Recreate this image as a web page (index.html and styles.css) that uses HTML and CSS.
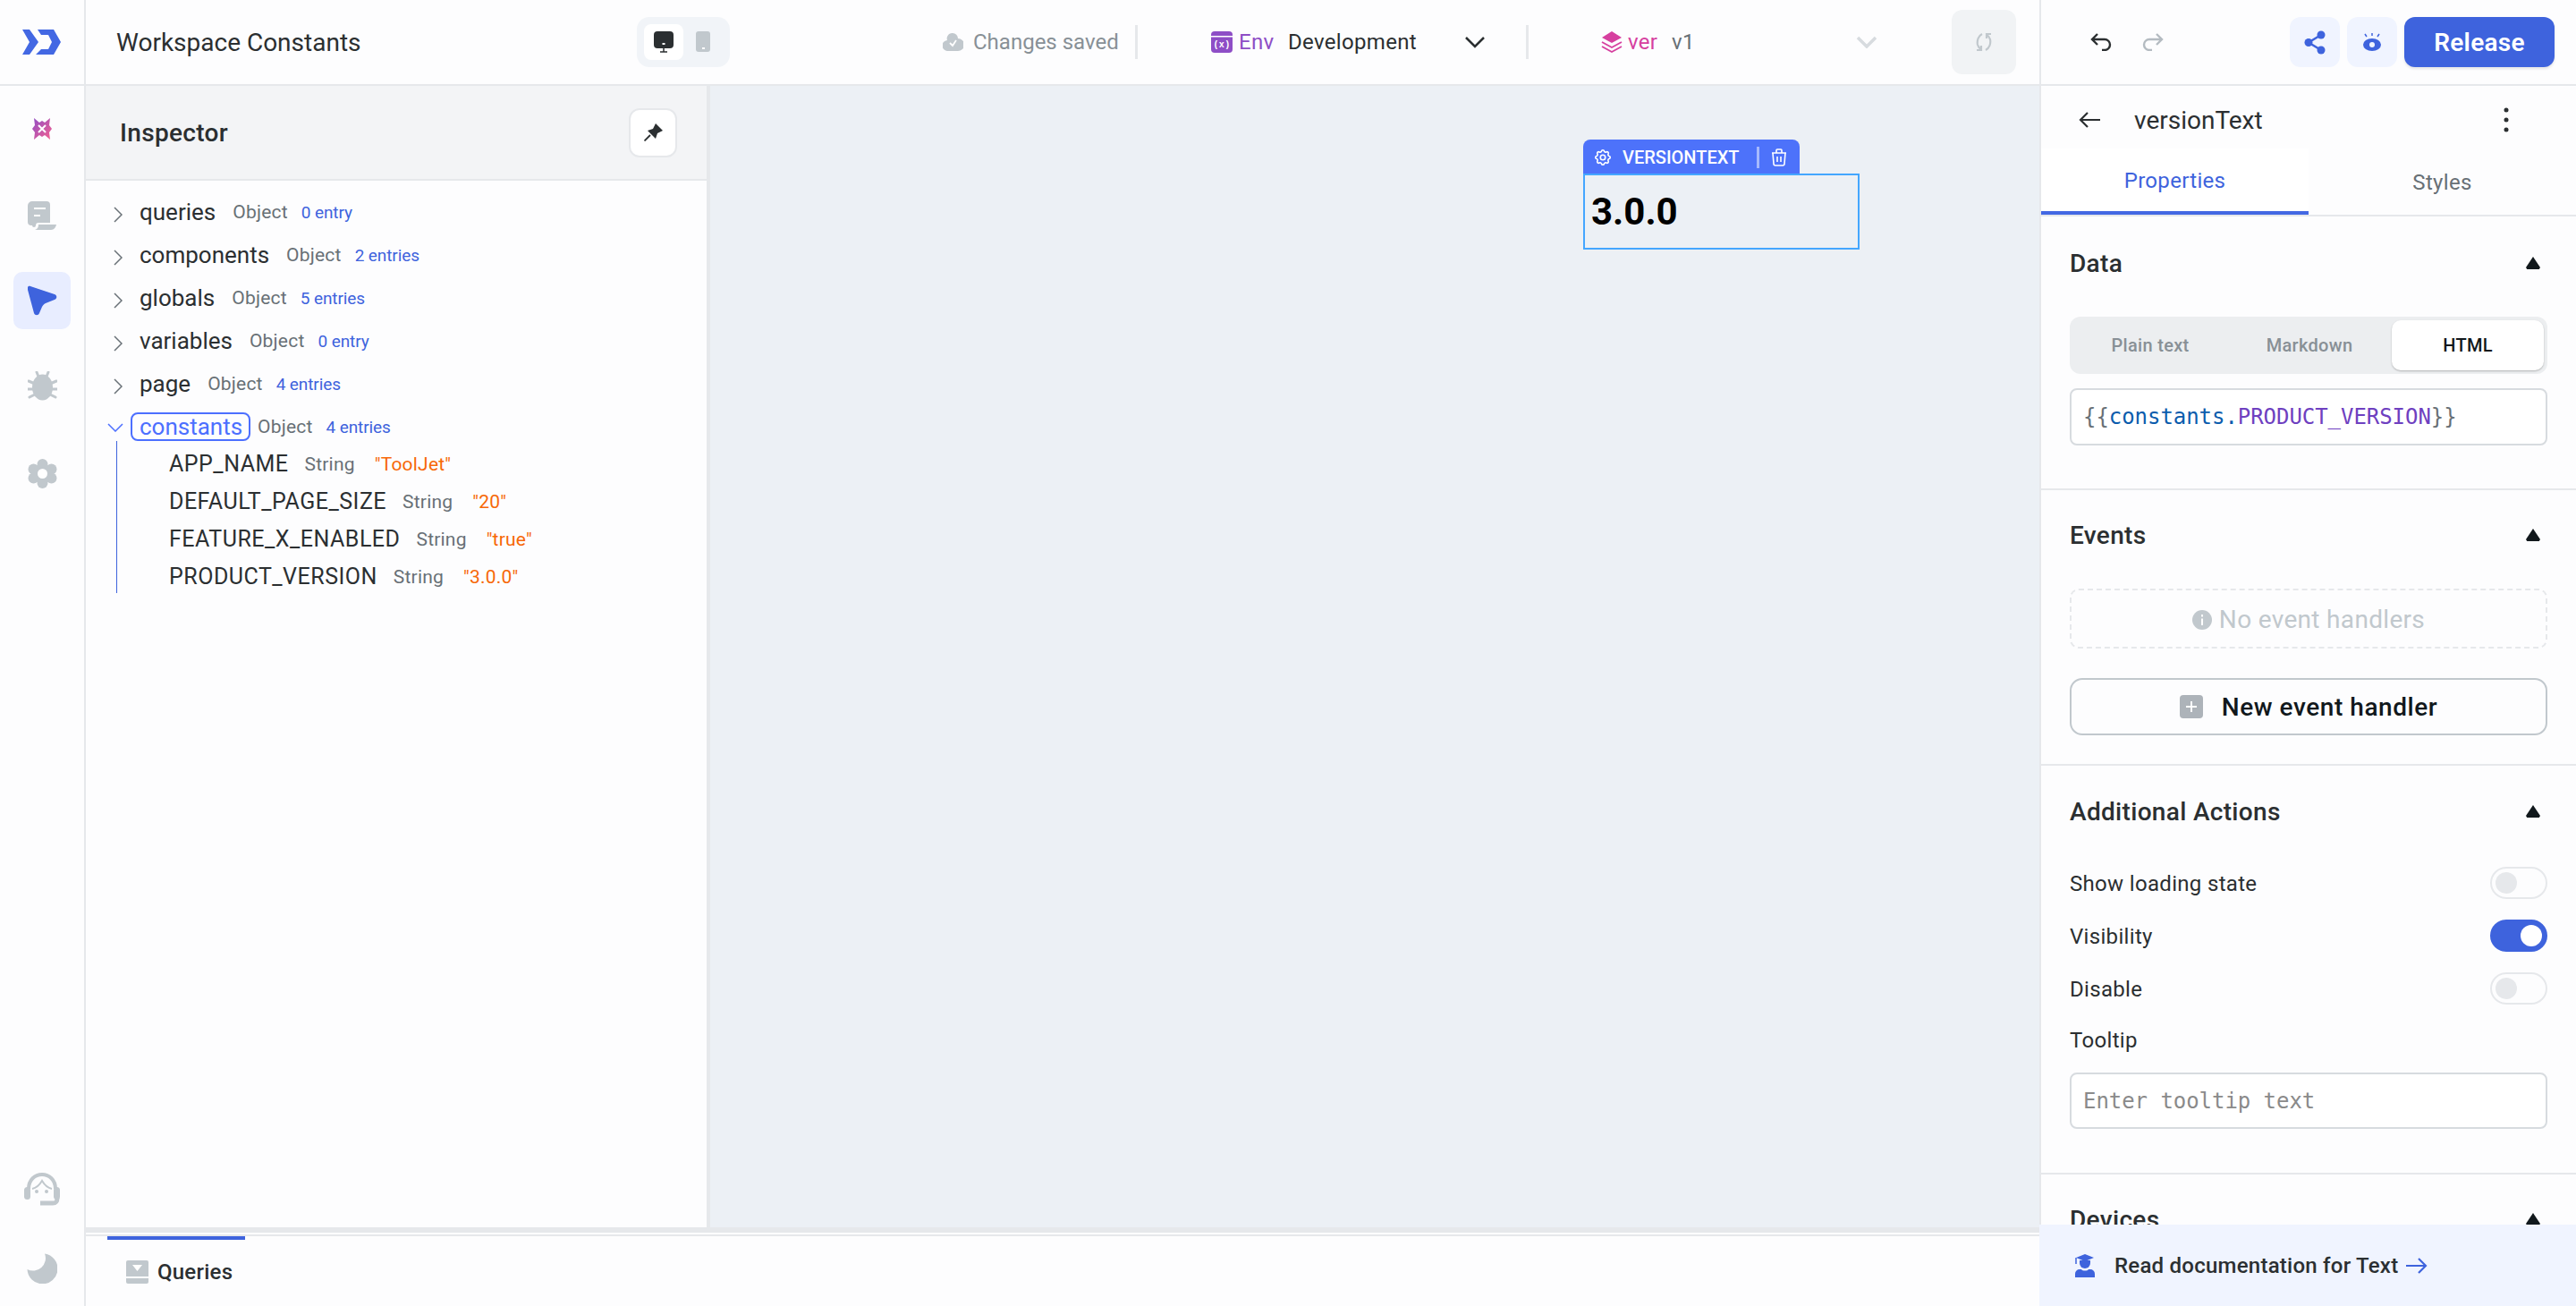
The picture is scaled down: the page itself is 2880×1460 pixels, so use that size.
FILE: index.html
```html
<!DOCTYPE html>
<html lang="en">
<head>
  <meta charset="UTF-8" />
  <title>Workspace Constants</title>
  <link rel="stylesheet" href="styles.css">
</head>
<body>
  <div class="app">
    <header class="topbar">
      <div class="logo-cell">
        <svg class="logo" viewBox="0 0 43 28"><path d="M0 0H8L18 14L8 28H0L8 14Z"/><path d="M17 0H35L43 14L35 28H15L21 22H29L33 14L29 6H21Z"/></svg>
      </div>
      <div class="top-main">
        <div class="app-name">Workspace Constants</div>
        <div class="layout-toggle">
          <span class="layout-on">
            <svg width="24" height="24" viewBox="0 0 24 24"><rect x="1" y="0" width="22" height="19" rx="4" fill="#2b2f31"/><rect x="10.500" y="13" width="3" height="2" fill="#fff"/><path d="M12 19V23M8 23H16" stroke="#2b2f31" stroke-width="1.500"/></svg>
          </span>
          <svg class="layout-off" width="16" height="24" viewBox="0 0 16 24"><rect width="16" height="23" rx="3" fill="#c1c8cd"/><rect x="7" y="18" width="3" height="2" fill="#fff"/></svg>
        </div>
        <div class="saved">
          <svg width="23" height="20" viewBox="0 0 23 20"><path d="M11 0a6 6 0 0 1 6 6a6.500 6.500 0 0 1 0 14H6A6 6 0 0 1 5 8a6 6 0 0 1 6-8Z" fill="#c1c8cd"/><path d="M8 11l3 3l4-6" fill="none" stroke="#fff" stroke-width="1.800"/></svg>
          <span>Changes saved</span>
        </div>
        <div class="top-divider"></div>
        <div class="env">
          <svg width="24" height="24" viewBox="0 0 24 24"><rect width="24" height="24" rx="4" fill="#8e4ec6"/><rect y="5" width="24" height="1.500" fill="#fff"/><text x="12" y="18" text-anchor="middle" class="env-glyph">(x)</text></svg>
          <span class="env-label">Env</span>
          <span class="env-value">Development</span>
          <svg class="chev" width="24" height="14" viewBox="0 0 24 14"><path d="M2 2L12 12L22 2" fill="none" stroke="#2b2f31" stroke-width="2.500"/></svg>
        </div>
        <div class="top-divider second"></div>
        <div class="ver">
          <svg width="24" height="24" viewBox="0 0 24 24" fill="none" stroke="#d6409f" stroke-width="1.800"><path d="M12 0L23 7L12 13L1 7Z" fill="#d6409f" stroke="none"/><path d="M1 12L12 18L23 12M1 17L12 23L23 17"/></svg>
          <span class="ver-label">ver</span>
          <span class="ver-value">v1</span>
          <svg class="chev" width="24" height="14" viewBox="0 0 24 14"><path d="M2 2L12 12L22 2" fill="none" stroke="#d7dbdf" stroke-width="3.500"/></svg>
        </div>
        <div class="sync">
          <svg width="20" height="20" viewBox="0 0 20 20" fill="none" stroke="#c1c8cd" stroke-width="2.200"><path d="M8 1C4 3 2 8 3 13C3.500 15 5 17 7 18M7 14V19H2"/><path d="M12 19C16 17 18 12 17 7C16.500 5 15 3 13 2M13 6V1H18"/></svg>
        </div>
      </div>
      <div class="top-right">
        <svg width="24" height="20" viewBox="0 0 24 20" fill="none" stroke="#2b2f31" stroke-width="2.400"><path d="M8 1L2 7L8 13M2 7H16a6 6 0 0 1 0 12H13"/></svg>
        <svg class="redo" width="24" height="20" viewBox="0 0 24 20" fill="none" stroke="#b4bbc1" stroke-width="2.400"><path d="M16 1L22 7L16 13M22 7H8a6 6 0 0 0 0 12H11"/></svg>
        <div class="top-actions">
          <div class="icon-btn">
            <svg width="24" height="27" viewBox="0 0 24 27"><path d="M19 5L5 13.500L19 22" fill="none" stroke="#3e63dd" stroke-width="2.500"/><circle cx="19" cy="5" r="4.500" fill="#3e63dd"/><circle cx="5" cy="13.500" r="4.500" fill="#3e63dd"/><circle cx="19" cy="22" r="4.500" fill="#3e63dd"/></svg>
          </div>
          <div class="icon-btn">
            <svg width="22" height="20" viewBox="0 0 22 20"><ellipse cx="11" cy="13" rx="10" ry="7" fill="#3e63dd"/><circle cx="11" cy="13" r="3" fill="#f0f4ff"/><path d="M11 0V3M3 1L5 4M19 1L17 4" stroke="#3e63dd" stroke-width="1.500"/></svg>
          </div>
          <button class="release">Release</button>
        </div>
      </div>
    </header>

    <div class="body-row">
      <nav class="sidebar">
        <div class="side-top">
          <svg width="24" height="24" viewBox="0 0 24 24"><defs><linearGradient id="star" x1="0" y1="0" x2="1" y2="1"><stop offset="0" stop-color="#8e4ec6"/><stop offset="1" stop-color="#f76190"/></linearGradient></defs><polygon points="3,0 9,5 12,3 15,5 21,0 20,8 23,12 20,16 21,24 15,19 12,21 9,19 3,24 4,16 1,12 4,8" fill="url(#star)"/><path d="M8 8L16 16M16 8L8 16" stroke="#fff" stroke-width="2"/></svg>
          <svg class="side-doc" width="33" height="33" viewBox="0 0 33 33"><path d="M5 0H21a4 4 0 0 1 4 4V24H12c-2 0-3 1-3 3a2 2 0 0 1-4 0H4a4 4 0 0 1-4-4V5a5 5 0 0 1 5-5Z" fill="#c1c8cd"/><path d="M12 26H32c-1 4-3 6-6 6H8c3-1 4-3 4-6Z" fill="#c1c8cd"/><path d="M7 8H20M7 16H14" stroke="#fff" stroke-width="2"/></svg>
          <div class="side-active">
            <svg width="33" height="34" viewBox="0 0 33 34"><path d="M3 1L30 10c3 1 3 5 0 6L20 20c-2 1-3 2-4 4L13 31c-1 3-5 3-6 0L0 5c-1-3 1-5 3-4Z" fill="#3e63dd"/></svg>
          </div>
          <svg class="side-bug" width="33" height="33" viewBox="0 0 33 33"><path d="M10 1L12 6M23 1L21 6M1 11L8 14M32 11L25 14M0 20H7M33 20H26M2 29L8 26M31 29L25 26" stroke="#c1c8cd" stroke-width="3" stroke-linecap="round"/><ellipse cx="16.500" cy="18" rx="11.500" ry="14.500" fill="#c1c8cd"/></svg>
          <svg class="side-gear" width="33" height="33" viewBox="0 0 33 33"><g fill="#c1c8cd"><circle cx="16.500" cy="6" r="6"/><circle cx="26.500" cy="11.500" r="6"/><circle cx="26.500" cy="21.500" r="6"/><circle cx="16.500" cy="27" r="6"/><circle cx="6.500" cy="21.500" r="6"/><circle cx="6.500" cy="11.500" r="6"/><circle cx="16.500" cy="16.500" r="11"/></g><circle cx="16.500" cy="16.500" r="5.500" fill="#fff"/></svg>
        </div>
        <div class="side-bottom">
          <svg width="40" height="37" viewBox="0 0 40 37"><path d="M5 18C5 8 12 2 20 2S35 8 35 18" fill="none" stroke="#c1c8cd" stroke-width="4"/><path d="M9 18C14 17 17 14 20 9C23 14 26 17 31 18" fill="none" stroke="#c1c8cd" stroke-width="2"/><rect x="0" y="16" width="7" height="14" rx="3.500" fill="#c1c8cd"/><rect x="33" y="16" width="7" height="14" rx="3.500" fill="#c1c8cd"/><circle cx="14" cy="21" r="2" fill="#c1c8cd"/><circle cx="25" cy="21" r="2" fill="#c1c8cd"/><path d="M37 28C37 32 36 34 32 34H18" fill="none" stroke="#c1c8cd" stroke-width="5"/></svg>
          <svg class="side-moon" width="34" height="34" viewBox="0 0 34 34"><path d="M20 .5A17 17 0 1 1 .5 18A14 14 0 0 0 20 .5Z" fill="#c1c8cd"/></svg>
        </div>
      </nav>

      <div class="center">
        <div class="work">
          <section class="inspector">
            <div class="inspector-head">
              <h2>Inspector</h2>
              <div class="pin-btn">
                <svg width="21" height="20" viewBox="0 0 21 20"><path d="M13 0L21 8L15 11L13 17L4 8L10 6Z" fill="#2b2f31"/><path d="M7 13L0.500 19.500" stroke="#2b2f31" stroke-width="1.800"/></svg>
              </div>
            </div>
            <div class="tree">
              <div class="row"><span class="caret"><svg width="10" height="18" viewBox="0 0 10 18"><path d="M1 1L9 9L1 17" fill="none" stroke="#687076" stroke-width="1.500"/></svg></span><span class="key">queries</span><span class="type">Object</span><span class="count">0 entry</span></div>
              <div class="row"><span class="caret"><svg width="10" height="18" viewBox="0 0 10 18"><path d="M1 1L9 9L1 17" fill="none" stroke="#687076" stroke-width="1.500"/></svg></span><span class="key">components</span><span class="type">Object</span><span class="count">2 entries</span></div>
              <div class="row"><span class="caret"><svg width="10" height="18" viewBox="0 0 10 18"><path d="M1 1L9 9L1 17" fill="none" stroke="#687076" stroke-width="1.500"/></svg></span><span class="key">globals</span><span class="type">Object</span><span class="count">5 entries</span></div>
              <div class="row"><span class="caret"><svg width="10" height="18" viewBox="0 0 10 18"><path d="M1 1L9 9L1 17" fill="none" stroke="#687076" stroke-width="1.500"/></svg></span><span class="key">variables</span><span class="type">Object</span><span class="count">0 entry</span></div>
              <div class="row"><span class="caret"><svg width="10" height="18" viewBox="0 0 10 18"><path d="M1 1L9 9L1 17" fill="none" stroke="#687076" stroke-width="1.500"/></svg></span><span class="key">page</span><span class="type">Object</span><span class="count">4 entries</span></div>
              <div class="row open"><span class="caret down"><svg width="18" height="10" viewBox="0 0 18 10"><path d="M1 1L9 9L17 1" fill="none" stroke="#4c6fff" stroke-width="1.500"/></svg></span><span class="key picked">constants</span><span class="type">Object</span><span class="count">4 entries</span></div>
              <div class="children">
                <div class="child"><span class="key">APP_NAME</span><span class="type">String</span><span class="value">"ToolJet"</span></div>
                <div class="child"><span class="key">DEFAULT_PAGE_SIZE</span><span class="type">String</span><span class="value">"20"</span></div>
                <div class="child"><span class="key">FEATURE_X_ENABLED</span><span class="type">String</span><span class="value">"true"</span></div>
                <div class="child"><span class="key">PRODUCT_VERSION</span><span class="type">String</span><span class="value">"3.0.0"</span></div>
              </div>
            </div>
          </section>
          <main class="canvas">
            <div class="widget-tag">
              <svg width="22" height="22" viewBox="0 0 24 24" fill="none" stroke="#fff" stroke-width="1.800"><path d="M10.325 4.317c.426-1.756 2.924-1.756 3.35 0a1.724 1.724 0 0 0 2.573 1.066c1.543-.94 3.31.826 2.37 2.37a1.724 1.724 0 0 0 1.065 2.572c1.756.426 1.756 2.924 0 3.35a1.724 1.724 0 0 0-1.066 2.573c.94 1.543-.826 3.31-2.37 2.37a1.724 1.724 0 0 0-2.572 1.065c-.426 1.756-2.924 1.756-3.35 0a1.724 1.724 0 0 0-2.573-1.066c-1.543.94-3.31-.826-2.37-2.37a1.724 1.724 0 0 0-1.065-2.572c-1.756-.426-1.756-2.924 0-3.35a1.724 1.724 0 0 0 1.066-2.573c-.94-1.543.826-3.31 2.37-2.37.996.608 2.296.07 2.572-1.065z"/><circle cx="12" cy="12" r="3"/></svg>
              <span class="widget-name">VERSIONTEXT</span>
              <span class="widget-sep"></span>
              <svg width="24" height="24" viewBox="0 0 24 24" fill="none" stroke="#fff" stroke-width="1.600"><path d="M4 7h16M10 11v6M14 11v6M5 7l1 12a2 2 0 0 0 2 2h8a2 2 0 0 0 2-2l1-12M9 7V4a1 1 0 0 1 1-1h4a1 1 0 0 1 1 1v3"/></svg>
            </div>
            <div class="widget-box">3.0.0</div>
          </main>
        </div>
        <div class="bottom-bar">
          <div class="bottom-inner">
            <div class="queries-tab">
              <svg width="25" height="26" viewBox="0 0 25 26"><path d="M2 0H23a2 2 0 0 1 2 2V18H0V2a2 2 0 0 1 2-2Z" fill="#c1c8cd"/><path d="M7 5H18L12.500 12Z" fill="#fff"/><path d="M0 20H25V24a2 2 0 0 1-2 2H2a2 2 0 0 1-2-2Z" fill="#c1c8cd"/></svg>
              <span>Queries</span>
            </div>
          </div>
        </div>
      </div>

      <aside class="panel">
        <div class="panel-scroll">
          <div class="panel-head">
            <svg width="24" height="20" viewBox="0 0 24 20" fill="none" stroke="#2b2f31" stroke-width="2.200"><path d="M10 2L2 10L10 18M2 10H24"/></svg>
            <span class="widget-title">versionText</span>
            <svg width="6" height="28" viewBox="0 0 6 28" fill="#2b2f31"><circle cx="3" cy="3" r="2.500"/><circle cx="3" cy="14" r="2.500"/><circle cx="3" cy="25" r="2.500"/></svg>
          </div>
          <div class="tabs">
            <div class="tab on">Properties</div>
            <div class="tab">Styles</div>
          </div>

          <section class="sec sec-data">
            <div class="sec-head"><h3>Data</h3><span class="tri"></span></div>
            <div class="segmented">
              <span>Plain text</span>
              <span>Markdown</span>
              <span class="seg-on">HTML</span>
            </div>
            <div class="code-input"><span class="brace">{{</span><span class="c-var">constants.</span><span class="c-prop">PRODUCT_VERSION</span><span class="brace">}}</span></div>
          </section>

          <section class="sec sec-events">
            <div class="sec-head"><h3>Events</h3><span class="tri"></span></div>
            <div class="no-events">
              <svg width="22" height="22" viewBox="0 0 22 22"><circle cx="11" cy="11" r="11" fill="#c1c8cd"/><path d="M11 9.500V17M11 5V7.500" stroke="#fff" stroke-width="2"/></svg>
              <span>No event handlers</span>
            </div>
            <button class="new-event">
              <span class="plus"></span>
              New event handler
            </button>
          </section>

          <section class="sec sec-actions">
            <div class="sec-head"><h3>Additional Actions</h3><span class="tri"></span></div>
            <div class="switch-row"><span>Show loading state</span><span class="switch"></span></div>
            <div class="switch-row"><span>Visibility</span><span class="switch on"></span></div>
            <div class="switch-row"><span>Disable</span><span class="switch"></span></div>
            <div class="field-label">Tooltip</div>
            <div class="code-input placeholder">Enter tooltip text</div>
          </section>

          <section class="sec sec-devices">
            <div class="sec-head"><h3>Devices</h3><span class="tri"></span></div>
          </section>
        </div>
        <div class="doc-link">
          <svg width="22" height="26" viewBox="0 0 22 26" fill="#3e63dd"><path d="M11 0L21 4L11 8L1 4Z"/><path d="M5 7H17V10a6 6 0 0 1-12 0Z"/><path d="M1 4V11" stroke="#3e63dd" stroke-width="1.500"/><path d="M0 26V22a5 5 0 0 1 5-5H7C8 19 14 19 15 17H17a5 5 0 0 1 5 5V26Z"/></svg>
          <span>Read documentation for Text</span>
          <svg class="doc-arrow" width="24" height="20" viewBox="0 0 24 20" fill="none" stroke="#3e63dd" stroke-width="2.200"><path d="M14 2L22 10L14 18M22 10H0"/></svg>
        </div>
      </aside>
    </div>
  </div>
</body>
</html>
```

FILE: styles.css
```css
*, *::before, *::after { box-sizing: border-box; }

body {
  margin: 0;
  font-family: 'Roboto', 'Liberation Sans', sans-serif;
  color: #2b2f31;
  background: #fdfdfe;
  letter-spacing: .02em;
}

svg { display: block; flex: none; }

.app {
  width: 2880px; height: 1460px;
  display: flex; flex-direction: column;
  overflow: hidden;
}

/* top bar */
.topbar {
  height: 96px; flex: none;
  display: flex;
  border-bottom: 2px solid #e6e8eb;
}
.logo-cell {
  width: 96px; flex: none;
  border-right: 2px solid #e6e8eb;
  display: flex; align-items: center; justify-content: center;
}
.logo { width: 43px; height: 28px; fill: #4368e3; margin-right: 2px; }
.top-main {
  flex: 1;
  display: flex; align-items: center;
  padding-left: 34px;
}
.app-name { width: 582px; font-size: 28px; letter-spacing: 0; color: #2b2f31; }
.layout-toggle {
  width: 104px; height: 56px;
  background: #f1f4f8;
  border-radius: 14px;
  display: flex; align-items: center;
  padding-left: 8px;
}
.layout-on {
  width: 44px; height: 40px;
  background: #fff;
  border-radius: 8px;
  display: flex; align-items: center; justify-content: center;
}
.layout-off { margin-left: 14px; }
.saved {
  width: 215px;
  margin-left: 238px;
  display: flex; align-items: center; gap: 11px;
  font-size: 24px; letter-spacing: 0; color: #889096;
}
.top-divider { width: 3px; height: 38px; background: #e6e8eb; }
.top-divider.second { margin-left: 45px; }
.env {
  margin-left: 82px;
  display: flex; align-items: center;
  font-size: 24px;
}
.env-glyph { font: 700 10px 'Liberation Mono', monospace; fill: #fff; }
.env-label { color: #8e4ec6; margin-left: 7px; width: 55px; }
.env-value { color: #2b2f31; width: 197px; }
.ver {
  display: flex; align-items: center;
  margin-left: 81px;
  font-size: 24px;
}
.ver-label { color: #d6409f; margin-left: 6px; width: 49px; }
.ver-value { color: #687076; width: 206px; }
.sync {
  width: 72px; height: 72px;
  margin-left: 83px;
  background: #f1f3f5;
  border-radius: 12px;
  display: flex; align-items: center; justify-content: center;
}
.top-right {
  width: 600px; flex: none;
  border-left: 2px solid #e6e8eb;
  display: flex; align-items: center;
  padding-left: 55px;
}
.redo { margin-left: 34px; }
.top-actions { margin-left: 141px; display: flex; gap: 8px; }
.icon-btn {
  width: 56px; height: 56px;
  background: #f0f4ff;
  border-radius: 12px;
  display: flex; align-items: center; justify-content: center;
}
.release {
  width: 168px; height: 56px;
  border: none; border-radius: 12px;
  background: #3e63dd; color: #fff;
  font: 600 28px 'Roboto', sans-serif;
  letter-spacing: .01em;
  box-shadow: 0 2px 3px rgba(0,0,0,.1);
}

/* layout below the bar */
.body-row { flex: 1; display: flex; min-height: 0; }

.sidebar {
  width: 96px; flex: none;
  border-right: 2px solid #e6e8eb;
  display: flex; flex-direction: column; justify-content: space-between;
  align-items: center;
  padding: 36px 0 25px;
}
.side-top, .side-bottom { display: flex; flex-direction: column; align-items: center; }
.side-doc { margin-top: 69px; }
.side-active {
  width: 64px; height: 64px;
  margin-top: 46px;
  background: #e8edff;
  border-radius: 10px;
  display: flex; align-items: center; justify-content: center;
}
.side-bug { margin-top: 47px; }
.side-gear { margin-top: 65px; }
.side-moon { margin-top: 53px; }

.center { flex: 1; min-width: 0; display: flex; flex-direction: column; }
.work { flex: 1; display: flex; min-height: 0; }

/* inspector */
.inspector {
  width: 698px; flex: none;
  border-right: 4px solid #e6e8eb;
}
.inspector-head {
  height: 106px;
  background: #f3f4f6;
  border-bottom: 2px solid #e6e8eb;
  display: flex; align-items: center; justify-content: space-between;
  padding: 0 33px 0 38px;
}
.inspector-head h2 { margin: 0; font-size: 28px; font-weight: 500; color: #2b2f31; }
.pin-btn {
  width: 54px; height: 55px;
  background: #fff;
  border: 2px solid #e6e8eb;
  border-radius: 12px;
  display: flex; align-items: center; justify-content: center;
}
.tree { padding-top: 11px; }
.row {
  height: 48px;
  display: flex; align-items: center;
  padding-left: 31px;
}
.caret { width: 29px; flex: none; padding-top: 6px; }
.caret.down { width: 39px; margin-left: -7px; margin-right: -3px; padding-top: 2px; }
.key { font-size: 26px; color: #2b2f31; letter-spacing: 0; }
.type { font-size: 21px; letter-spacing: .01em; color: #687076; margin-left: 19px; }
.count { font-size: 19px; letter-spacing: -.005em; color: #3e63dd; margin-left: 15px; }
.key.picked {
  color: #4c6fff;
  width: 134px; height: 32px; line-height: 28px;
  margin-left: -10px;
  padding: 0 8px;
  border: 2px solid #4c6fff;
  border-radius: 8px;
}
.row.open .type { margin-left: 8px; }
.children {
  margin: -8px 0 0 34px;
  padding-left: 58px;
  border-left: 1px solid #3e63dd;
  height: 170px;
}
.child {
  height: 42px; padding-top: 9px;
  display: flex; align-items: center;
}
.child .key { font-size: 25px; letter-spacing: .02em; }
.child .type { margin-left: 18px; }
.value { font-size: 21px; letter-spacing: .01em; color: #f76808; margin-left: 22px; }

/* canvas */
.canvas {
  flex: 1;
  position: relative;
  background: #ecf0f5;
}
.widget-tag {
  position: absolute; left: 976px; top: 60px;
  width: 242px; height: 39px;
  background: #4d72fa;
  border-radius: 8px 8px 0 0;
  display: flex; align-items: center;
  padding-left: 11px;
  color: #fff;
}
.widget-name { width: 150px; margin-left: 11px; font-size: 20px; font-weight: 500; letter-spacing: 0; }
.widget-sep { width: 3px; height: 24px; background: rgba(255,255,255,.5); margin-right: 10px; }
.widget-box {
  position: absolute; left: 976px; top: 98px;
  width: 309px; height: 85px;
  border: 2px solid #44a6ff;
  padding-left: 7px;
  display: flex; align-items: center;
  font-size: 42px; font-weight: 700;
  letter-spacing: 0;
  color: #000;
}

/* bottom tabs */
.bottom-bar {
  height: 88px; flex: none;
  border-top: 6px solid #e6e8eb;
  padding-top: 2px;
}
.bottom-inner { height: 100%; border-top: 2px solid #e6e8eb; padding-left: 24px; }
.queries-tab {
  width: 154px; height: 100%;
  border-top: 4px solid #3e63dd;
  display: flex; align-items: center; gap: 10px;
  padding: 0 0 2px 21px;
  font-size: 24px; font-weight: 500;
  letter-spacing: .01em;
  color: #2b2f31;
}

/* right panel */
.panel { width: 600px; flex: none; display: flex; flex-direction: column; }
.panel-scroll {
  flex: 1; min-height: 0;
  overflow: hidden;
  border-left: 2px solid #e6e8eb;
}
.panel-head {
  height: 70px;
  display: flex; align-items: center;
  padding: 6px 75px 0 42px;
  font-size: 28px;
  letter-spacing: 0;
}
.widget-title { margin-left: 38px; flex: 1; font-size: 28px; }
.tabs {
  display: flex; height: 76px;
  border-bottom: 2px solid #e6e8eb;
}
.tab {
  width: 299px;
  display: flex; align-items: center; justify-content: center;
  font-size: 24px; color: #687076;
  padding-top: 2px;
}
.tab.on {
  background: #fff;
  color: #3e63dd;
  border-bottom: 4px solid #4368e3;
}
.sec { padding: 0 32px; border-bottom: 2px solid #e6e8eb; }
.sec-data { padding-top: 32px; padding-bottom: 48px; }
.sec-events { padding-top: 30px; padding-bottom: 32px; }
.sec-actions { padding-top: 31px; padding-bottom: 49px; }
.sec-devices { padding-top: 30px; border-bottom: none; }
.sec-head {
  height: 40px;
  display: flex; align-items: center; justify-content: space-between;
}
.sec-head h3 { margin: 0; font-size: 28px; font-weight: 500; color: #2b2f31; }
.tri {
  width: 16px; height: 14px;
  margin-right: 8px;
  background: #11181c;
  clip-path: polygon(50% 0, 100% 85%, 92% 100%, 8% 100%, 0 85%);
}
.segmented {
  margin-top: 40px;
  height: 64px;
  background: #eceef0;
  border-radius: 12px;
  display: grid; grid-template-columns: 172px 184px 170px;
  align-items: center;
  padding: 4px;
  font-size: 20px; font-weight: 500;
  color: #889096;
  text-align: center;
}
.segmented span { line-height: 56px; }
.seg-on {
  background: #fff;
  border-radius: 10px;
  color: #11181c;
  box-shadow: 0 1px 2px rgba(0,0,0,.25);
}
.code-input {
  margin-top: 16px;
  height: 64px;
  background: #fff;
  border: 2px solid #d7dbdf;
  border-radius: 8px;
  padding-left: 13px;
  display: flex; align-items: center;
  font: 24px 'DejaVu Sans Mono', 'Liberation Mono', monospace;
  letter-spacing: -.05px;
}
.brace { color: #687076; }
.c-var { color: #0b5cad; }
.c-prop { color: #6e40c0; }
.code-input.placeholder { color: #8a8a8a; height: 63px; }
.no-events {
  margin-top: 40px;
  height: 67px;
  padding-top: 2px;
  border: 2px dashed #e6e8eb;
  border-radius: 10px;
  display: flex; align-items: center; justify-content: center; gap: 8px;
  font-size: 28px; color: #c1c8cd;
}
.new-event {
  margin-top: 33px;
  width: 100%; height: 64px;
  background: transparent;
  border: 2px solid #c1c8cd;
  border-radius: 14px;
  display: flex; align-items: center; justify-content: center; gap: 21px;
  font: 500 28px 'Roboto', sans-serif;
  letter-spacing: .02em;
  color: #11181c;
  padding-right: 6px;
}
.plus {
  width: 26px; height: 26px;
  background: #adb3b9;
  border-radius: 4px;
  position: relative;
}
.plus::before, .plus::after {
  content: ''; position: absolute;
  background: #fff;
}
.plus::before { left: 12px; top: 7px; width: 2px; height: 12px; }
.plus::after { left: 7px; top: 12px; width: 12px; height: 2px; }
.switch-row {
  height: 36px; margin-top: 23px;
  display: flex; align-items: center; justify-content: space-between;
  font-size: 24px;
}
.switch-row > span:first-child { padding-top: 2px; }
.sec-head + .switch-row { margin-top: 42px; }
.switch {
  width: 64px; height: 36px;
  border: 2px solid #e6e8eb;
  border-radius: 18px;
  position: relative;
}
.switch::after {
  content: ''; position: absolute;
  left: 4px; top: 4px;
  width: 24px; height: 24px;
  border-radius: 50%;
  background: #e6e8eb;
}
.switch.on { background: #3e63dd; border-color: #3e63dd; }
.switch.on::after { left: auto; right: 4px; background: #fff; }
.field-label { margin-top: 20px; height: 40px; line-height: 40px; font-size: 24px; }
.doc-link {
  height: 91px; flex: none;
  background: #f0f4ff;
  display: flex; align-items: center;
  padding: 0 0 0 40px;
  font-size: 24px; font-weight: 500;
  letter-spacing: .01em;
  color: #2b2f31;
}
.doc-link span { margin-left: 22px; }
.doc-arrow { margin-left: 9px; }
```
